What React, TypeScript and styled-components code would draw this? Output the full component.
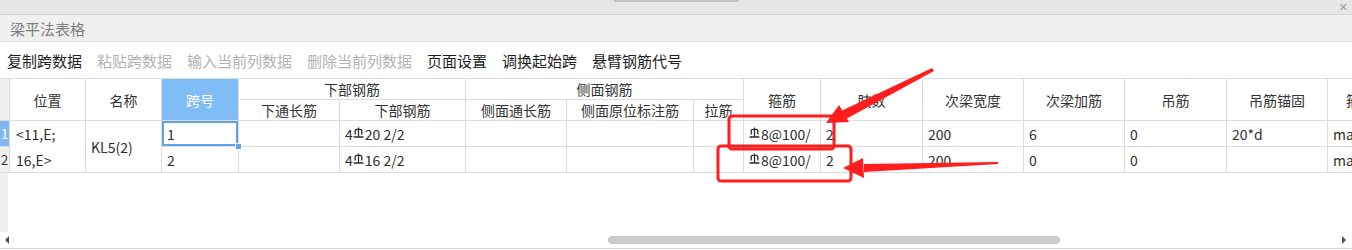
import styled, { createGlobalStyle } from "styled-components";

const GlobalStyle = createGlobalStyle`
  html, body {
    margin: 0;
    padding: 0;
    background: #ffffff;
  }
  body {
    font-family: "Noto Sans CJK SC", "Noto Sans", sans-serif;
  }
`;

// column widths incl. the 1px right border of every cell
const COLS = [10, 76, 76, 77, 101, 126, 101, 127, 50, 77, 102, 101, 101, 102, 101, 140];
const LINE = "#dcdcdc";

type CellSpec = {
  col: number;
  row: number;
  colSpan?: number;
  rowSpan?: number;
};

// the HRB400 rebar mark drawn as a small symbol
function RebarMark() {
  return (
    <Mark viewBox="0 0 11 11" width="11" height="11">
      <path
        d="M5.5 0.6 V10 M2.2 7.6 V4 Q2.2 2.3 3.9 2.3 H7.1 Q8.8 2.3 8.8 4 V7.6 M0.6 10 H10.4"
        fill="none"
        stroke="#2a2a2a"
        strokeWidth="1.3"
      />
    </Mark>
  );
}

function Bar({ d, text }: { d: boolean; text: string }) {
  return <ToolItem $disabled={d}>{text}</ToolItem>;
}

export default function App() {
  const head = (spec: CellSpec, text: string, blue = false) => (
    <HeadCell
      key={text + spec.col + spec.row}
      $blue={blue}
      style={{
        gridColumn: `${spec.col} / span ${spec.colSpan ?? 1}`,
        gridRow: `${spec.row} / span ${spec.rowSpan ?? 1}`,
      }}
    >
      {text}
    </HeadCell>
  );

  const data = (spec: CellSpec, content: React.ReactNode, key: string) => (
    <DataCell
      key={key}
      style={{
        gridColumn: `${spec.col} / span ${spec.colSpan ?? 1}`,
        gridRow: `${spec.row} / span ${spec.rowSpan ?? 1}`,
      }}
    >
      {content}
    </DataCell>
  );

  return (
    <Window>
      <GlobalStyle />
      <TopStrip>
        <StripThumb />
        <CloseX>✕</CloseX>
      </TopStrip>
      <TitleBar>梁平法表格</TitleBar>
      <Toolbar>
        <Bar d={false} text="复制跨数据" />
        <Bar d text="粘贴跨数据" />
        <Bar d text="输入当前列数据" />
        <Bar d text="删除当前列数据" />
        <Bar d={false} text="页面设置" />
        <Bar d={false} text="调换起始跨" />
        <Bar d={false} text="悬臂钢筋代号" />
      </Toolbar>

      <Sheet>
        <Grid>
          <RowHead style={{ gridColumn: "1", gridRow: "1 / span 2" }} />
          {head({ col: 2, row: 1, rowSpan: 2 }, "位置")}
          {head({ col: 3, row: 1, rowSpan: 2 }, "名称")}
          {head({ col: 4, row: 1, rowSpan: 2 }, "跨号", true)}
          {head({ col: 5, row: 1, colSpan: 2 }, "下部钢筋")}
          {head({ col: 5, row: 2 }, "下通长筋")}
          {head({ col: 6, row: 2 }, "下部钢筋")}
          {head({ col: 7, row: 1, colSpan: 3 }, "侧面钢筋")}
          {head({ col: 7, row: 2 }, "侧面通长筋")}
          {head({ col: 8, row: 2 }, "侧面原位标注筋")}
          {head({ col: 9, row: 2 }, "拉筋")}
          {head({ col: 10, row: 1, rowSpan: 2 }, "箍筋")}
          {head({ col: 11, row: 1, rowSpan: 2 }, "肢数")}
          {head({ col: 12, row: 1, rowSpan: 2 }, "次梁宽度")}
          {head({ col: 13, row: 1, rowSpan: 2 }, "次梁加筋")}
          {head({ col: 14, row: 1, rowSpan: 2 }, "吊筋")}
          {head({ col: 15, row: 1, rowSpan: 2 }, "吊筋锚固")}
          <HeadCell $blue={false} $left style={{ gridColumn: "16", gridRow: "1 / span 2" }}>
            箍筋加密长度
          </HeadCell>

          <RowHead $active style={{ gridColumn: "1", gridRow: "3" }}>1</RowHead>
          <RowHead style={{ gridColumn: "1", gridRow: "4" }}>2</RowHead>

          <WrapCell style={{ gridColumn: "2", gridRow: "3 / span 2" }}>
            {"<11,E;"}
            <br />
            {"16,E>"}
          </WrapCell>
          <CenterCell style={{ gridColumn: "3", gridRow: "3 / span 2" }}>KL5(2)</CenterCell>

          <SelectedCell style={{ gridColumn: "4", gridRow: "3" }}>
            1
            <Handle />
          </SelectedCell>
          {data({ col: 4, row: 4 }, "2", "k2")}

          {[3, 4].map((r) => [5, 7, 8, 9].map((c) => data({ col: c, row: r }, "", `e${r}-${c}`)))}

          {data({ col: 6, row: 3 }, <>4<RebarMark />20 2/2</>, "b1")}
          {data({ col: 6, row: 4 }, <>4<RebarMark />16 2/2</>, "b2")}
          {data({ col: 10, row: 3 }, <><RebarMark />8@100/</>, "g1")}
          {data({ col: 10, row: 4 }, <><RebarMark />8@100/</>, "g2")}
          {data({ col: 11, row: 3 }, "2", "z1")}
          {data({ col: 11, row: 4 }, "2", "z2")}
          {data({ col: 12, row: 3 }, "200", "w1")}
          {data({ col: 12, row: 4 }, "200", "w2")}
          {data({ col: 13, row: 3 }, "6", "j1")}
          {data({ col: 13, row: 4 }, "0", "j2")}
          {data({ col: 14, row: 3 }, "0", "d1")}
          {data({ col: 14, row: 4 }, "0", "d2")}
          {data({ col: 15, row: 3 }, "20*d", "m1")}
          {data({ col: 15, row: 4 }, "", "m2")}
          {data({ col: 16, row: 3 }, "max(50,0.2*h)", "x1")}
          {data({ col: 16, row: 4 }, "max(50,0.2*h)", "x2")}
        </Grid>
        <Filler />
        <HScroll>
          <ArrowL />
          <ScrollTrack>
            <ScrollThumb />
          </ScrollTrack>
          <ArrowR />
        </HScroll>
      </Sheet>

      {/* red annotation marks drawn over the sheet */}
      <Marks viewBox="0 0 1352 250" width="1352" height="250">
        <g fill="none" stroke="#ff1d1d" strokeWidth="3" strokeLinejoin="round">
          <rect x="729" y="116" width="105" height="33" rx="3" />
          <rect x="718" y="146" width="133" height="35" rx="3" />
        </g>
        <g fill="#ff1d1d">
          <polygon points="932,68 934,71 846,119 839,112" />
          <polygon points="826,123 839,105 849,122" />
          <polygon points="998,162 998,164 864,172 864,164" />
          <polygon points="843,168 863,158 864,178" />
        </g>
      </Marks>
    </Window>
  );
}

const Window = styled.div`
  position: relative;
  width: 1352px;
  height: 250px;
  display: flex;
  flex-direction: column;
  overflow: hidden;
  background: #ffffff;
`;

const TopStrip = styled.div`
  position: relative;
  height: 14px;
  flex: none;
  background: #e7e7e7;
  display: flex;
  justify-content: flex-end;
  align-items: center;
  padding-right: 4px;
`;

const StripThumb = styled.div`
  position: absolute;
  left: 614px;
  top: 0;
  width: 125px;
  height: 2px;
  background: #c4c4c4;
`;

const CloseX = styled.span`
  font-size: 11px;
  line-height: 1;
  color: #9a9a9a;
  font-family: "DejaVu Sans", sans-serif;
`;

const TitleBar = styled.div`
  height: 26px;
  flex: none;
  display: flex;
  align-items: center;
  padding-left: 10px;
  background: #f0f0f0;
  border-top: 1px solid #d6d6d6;
  border-bottom: 1px solid #e2e2e2;
  color: #7e7e7e;
  font-size: 15px;
`;

const Toolbar = styled.div`
  height: 36px;
  flex: none;
  display: flex;
  align-items: center;
  gap: 15px;
  padding-left: 7px;
  background: #ffffff;
`;

const ToolItem = styled.span<{ $disabled: boolean }>`
  font-size: 15px;
  color: ${(p) => (p.$disabled ? "#b2b2b2" : "#1e1e1e")};
  white-space: nowrap;
`;

const Sheet = styled.div`
  flex: 1;
  display: flex;
  flex-direction: column;
  border-top: 1px solid ${LINE};
  border-bottom: 1px solid #d6d6d6;
  margin-bottom: 1px;
  min-height: 0;
`;

const Grid = styled.div`
  display: grid;
  grid-template-columns: ${COLS.map((c) => `${c}px`).join(" ")};
  grid-template-rows: 21px 21px 26px 26px;
  font-size: 14px;
  color: #2e2e2e;
`;

const BaseCell = styled.div`
  box-sizing: border-box;
  border-right: 1px solid ${LINE};
  border-bottom: 1px solid ${LINE};
  overflow: hidden;
  white-space: nowrap;
`;

const HeadCell = styled(BaseCell)<{ $blue: boolean; $left?: boolean }>`
  display: flex;
  align-items: center;
  justify-content: ${(p) => (p.$left ? "flex-start" : "center")};
  padding-left: ${(p) => (p.$left ? "18px" : "0")};
  background: ${(p) => (p.$blue ? "#80bcf5" : "#ffffff")};
  color: ${(p) => (p.$blue ? "#ffffff" : "#333333")};
`;

const RowHead = styled(BaseCell)<{ $active?: boolean }>`
  display: flex;
  align-items: center;
  justify-content: center;
  background: ${(p) => (p.$active ? "#7fb7ee" : "#f0f0f0")};
  color: ${(p) => (p.$active ? "#ffffff" : "#333333")};
  font-size: 13px;
`;

const DataCell = styled(BaseCell)`
  display: flex;
  align-items: center;
  padding-left: 5px;
`;

const WrapCell = styled(BaseCell)`
  padding: 0 0 0 6px;
  line-height: 26px;
`;

const CenterCell = styled(DataCell)``;

const SelectedCell = styled(DataCell)`
  position: relative;
  overflow: visible;
  box-shadow: inset 0 0 0 2px #5fa3ea;
`;

const Handle = styled.span`
  position: absolute;
  right: -4px;
  bottom: -4px;
  width: 5px;
  height: 5px;
  background: #5fa3ea;
  border: 1px solid #ffffff;
  z-index: 1;
`;

const Mark = styled.svg`
  align-self: flex-start;
  margin-top: 6px;
  margin-right: 1px;
  flex: none;
`;

const Filler = styled.div`
  flex: 1;
  border-left: 8px solid #f0f0f0;
`;

const HScroll = styled.div`
  height: 16px;
  flex: none;
  display: flex;
  align-items: center;
  padding: 0 6px 0 5px;
`;

const ArrowL = styled.span`
  width: 0;
  height: 0;
  border-top: 4px solid transparent;
  border-bottom: 4px solid transparent;
  border-right: 4px solid #4a5060;
`;

const ArrowR = styled.span`
  width: 0;
  height: 0;
  border-top: 4px solid transparent;
  border-bottom: 4px solid transparent;
  border-left: 4px solid #4a5060;
`;

const ScrollTrack = styled.div`
  flex: 1;
  height: 8px;
  display: flex;
  padding-left: 599px;
`;

const ScrollThumb = styled.div`
  width: 452px;
  height: 8px;
  border-radius: 4px;
  background: #cbcbcb;
`;

const Marks = styled.svg`
  position: absolute;
  left: 0;
  top: 0;
  pointer-events: none;
`;
